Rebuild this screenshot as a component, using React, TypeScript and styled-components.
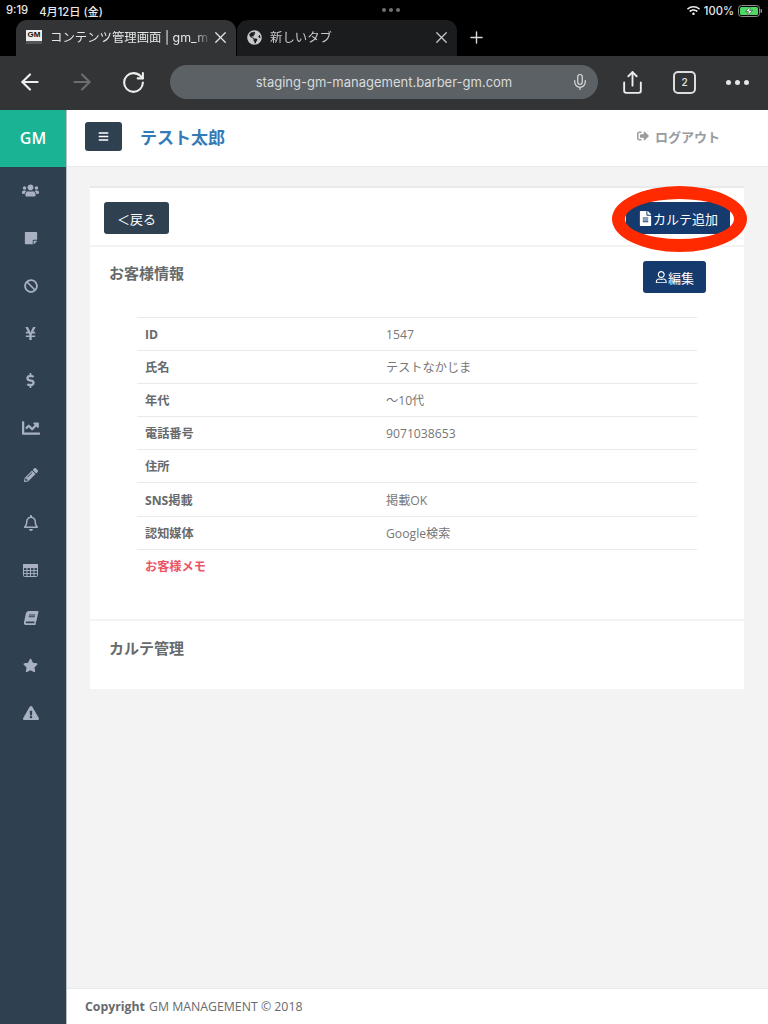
import React from "react";
import styled, { createGlobalStyle } from "styled-components";
import { ArrowLeft, ArrowRight, RotateCw, Mic, Share, X, Plus } from "lucide-react";
import {
  FaUsers, FaStickyNote, FaBan, FaYenSign, FaDollarSign, FaChartLine, FaPencilAlt, FaRegBell,
  FaBook, FaStar, FaExclamationTriangle, FaBars, FaSignOutAlt, FaFileAlt, FaRegUser,
  FaGlobeAmericas, FaWifi,
} from "react-icons/fa";

const SANS = `"Open Sans", "Noto Sans CJK JP", sans-serif`;
const UI = `Inter, "Noto Sans CJK JP", sans-serif`;

const Global = createGlobalStyle`
  html, body { margin: 0; padding: 0; background: #000; }
  * { box-sizing: border-box; }
  #root { width: 768px; height: 1024px; overflow: hidden; }
`;

const Screen = styled.div`
  position: relative; width: 768px; height: 1024px; display: flex; flex-direction: column;
  font-family: ${SANS}; background: #000;
`;
const Status = styled.div`
  height: 20px; flex: none; padding: 1px 6px 0 6px; display: flex; align-items: center;
  justify-content: space-between; color: #e8e8e8; font: 500 11.2px ${UI};
`;
const StatusLeft = styled.div`display: flex; gap: 11px;`;
const StatusRight = styled.div`display: flex; align-items: center; gap: 4px;`;
const Dots = styled.div`
  display: flex; gap: 3px; margin-left: -8px; margin-bottom: 1px;
  & i { width: 4px; height: 4px; border-radius: 50%; background: #6f7072; display: block; }
`;
const Tabs = styled.div`
  height: 36px; flex: none; padding-left: 16px; display: flex; align-items: stretch; gap: 1px;
`;
const Tab = styled.div<{ $active?: boolean }>`
  width: 220px; border-radius: 11px 11px 0 0; padding: 0 6px 2px 10px; display: flex; align-items: center;
  background: ${(p) => (p.$active ? "#333436" : "#1b1c1e")};
  color: ${(p) => (p.$active ? "#e6e6e6" : "#c9c9c9")}; font: 400 12.4px ${UI};
`;
const Favicon = styled.div`
  width: 16px; height: 14px; background: #eee; flex: none; margin-right: 8px; display: flex; flex-direction: column;
  align-items: center; justify-content: flex-start; color: #111; font: 900 8px/9px "Liberation Sans", sans-serif;
  border-bottom: 3px solid #555;
`;
const TabTitle = styled.span`
  flex: 1; min-width: 0; overflow: hidden; white-space: nowrap;
  mask-image: linear-gradient(to right, #000 90%, transparent 100%);
`;
const TabAdd = styled.div`
  width: 36px; padding-bottom: 2px; display: flex; align-items: center; justify-content: center; color: #d8d8d8;
`;
const Toolbar = styled.div`
  height: 54px; flex: none; background: #333436; display: flex; align-items: center; color: #eee; padding-bottom: 2px;
`;
const NavIcons = styled.div`
  width: 170px; flex: none; display: flex; align-items: center; padding-left: 17px; gap: 26px;
`;
const Url = styled.div`
  width: 428px; height: 34px; flex: none; border-radius: 17px; background: #5c6165; color: #d9dbdc;
  display: flex; align-items: center; justify-content: center; position: relative; font: 400 13px ${UI};
`;
const MicSpot = styled.span`position: absolute; right: 9px; top: 8px; display: flex; color: #d9dbdc;`;
const ToolRight = styled.div`
  flex: 1; display: flex; align-items: center; padding-left: 22px; gap: 28px;
`;
const TabCount = styled.div`
  width: 23px; height: 23px; border: 2px solid #ddd; border-radius: 5px; font: 600 10px/19px ${UI};
  text-align: center; color: #ddd;
`;
const More = styled.div`
  display: flex; gap: 4px; margin-left: 2px;
  & i { width: 5px; height: 5px; border-radius: 50%; background: #e6e6e6; display: block; }
`;
const Body = styled.div`flex: 1; display: flex; min-height: 0; background: #f3f3f4;`;
const Side = styled.nav`
  width: 67px; flex: none; background: #2f4050; border-right: 1px solid #b8bec4; display: flex; flex-direction: column;
`;
const Brand = styled.div`
  height: 57px; flex: none; background: #1ab394; color: #fff; font: 600 16px/57px ${SANS}; text-align: center;
`;
const SideItems = styled.div`
  display: flex; flex-direction: column; align-items: center; padding-right: 5px;
`;
const SideItem = styled.div<{ $size: number; $skew?: boolean }>`
  height: 47.45px; width: 100%; display: flex; align-items: center; justify-content: center; color: #a7b1c2;
  font-size: ${(p) => p.$size}px;
  & svg { transform: ${(p) => (p.$skew ? "skewX(-12deg)" : "none")}; }
`;
const Main = styled.div`flex: 1; display: flex; flex-direction: column; min-width: 0;`;
const Header = styled.header`
  height: 57px; flex: none; background: #fff; border-bottom: 1px solid #e7eaec; display: flex; align-items: center;
  padding: 0 48px 4px 18px;
`;
const Burger = styled.div`
  width: 37px; height: 29px; border-radius: 3px; background: #2f4050; color: #fff; display: flex;
  align-items: center; justify-content: center; font-size: 11px;
`;
const UserName = styled.div`
  margin-left: 18px; flex: 1; color: #337ab7; font: 600 17px ${SANS};
`;
const Logout = styled.div`
  display: flex; align-items: center; gap: 6px; color: #999c9e; font: 600 13px ${SANS};
`;
const Content = styled.div`flex: 1; padding: 19px 24px 0 23px;`;
const Card = styled.section`
  height: 503px; background: #fff; border-top: 2px solid #e7eaec; display: flex; flex-direction: column;
`;
const CardTop = styled.div`
  height: 59px; flex: none; border-bottom: 2px solid #f3f3f4; padding: 14px 14px 0 14px; display: flex;
  justify-content: space-between; align-items: flex-start;
`;
const Btn = styled.div<{ $tone: "dark" | "navy" }>`
  height: 32px; border-radius: 3px; display: flex; align-items: center; justify-content: center;
  color: #fff; font: 400 13px ${SANS}; padding: 0 ${(p) => (p.$tone === "dark" ? "13px" : "12px")};
  background: ${(p) => (p.$tone === "dark" ? "#2f4050" : "#153a6e")};
`;
const InfoHead = styled.div`
  padding: 14px 38px 0 19px; height: 70px; flex: none; display: flex; justify-content: space-between; align-items: flex-start;
`;
const Title = styled.h3`margin: 1px 0 0; color: #676a6c; font: 600 15px ${SANS};`;
const InfoTable = styled.div`margin: 0 47px; border-top: 1px solid #e7eaec;`;
const Row = styled.div`
  height: 33.1px; display: grid; grid-template-columns: 241px 1fr; align-items: center; padding-left: 8px;
  border-bottom: 1px solid #e7eaec; font-size: 12.2px; color: #777;
  &:last-child { border-bottom: 0; }
`;
const Label = styled.div<{ $alert?: boolean }>`
  font-weight: 700; color: ${(p) => (p.$alert ? "#ed5565" : "#676a6c")};
`;
const Karte = styled.div`
  margin-top: 36px; border-top: 2px solid #f3f3f4; padding: 15px 19px;
`;
const Footer = styled.footer`
  height: 36px; flex: none; background: #fff; border-top: 1px solid #e7eaec; padding: 0 18px; display: flex;
  align-items: center; color: #676a6c; font-size: 12.3px;
  & b { margin-right: 4px; }
`;
const Marker = styled.div`
  position: absolute; left: 612px; top: 186px; width: 135px; height: 66px; border: 13px solid #ff2a00;
  border-radius: 50%; pointer-events: none;
`;
const BtnIcon = styled.span<{ $size: number }>`display: inline-flex; font-size: ${(p) => p.$size}px;`;

const TableIcon = () => (
  <svg width="15" height="13" viewBox="0 0 15 13" fill="none" stroke="currentColor" strokeWidth="1">
    <rect x="0.5" y="0.5" width="14" height="12" rx="1" />
    <path d="M0 3.6h15M0 6.6h15M0 9.6h15M4 3v10M7.5 3v10M11 3v10" />
    <rect x="0.5" y="0.5" width="14" height="3" fill="currentColor" />
  </svg>
);

const sideIcons: [React.ComponentType, number, boolean?][] = [
  [FaUsers, 17], [FaStickyNote, 14], [FaBan, 14], [FaYenSign, 15], [FaDollarSign, 15], [FaChartLine, 18],
  [FaPencilAlt, 14], [FaRegBell, 16], [TableIcon, 15], [FaBook, 14, true], [FaStar, 15], [FaExclamationTriangle, 16],
];
const rows: [string, string][] = [
  ["ID", "1547"], ["氏名", "テストなかじま"], ["年代", "～10代"], ["電話番号", "9071038653"],
  ["住所", ""], ["SNS掲載", "掲載OK"], ["認知媒体", "Google検索"],
];

export default function App() {
  return (
    <Screen>
      <Global />
      <Status>
        <StatusLeft><span>9:19</span><span>4月12日 (金)</span></StatusLeft>
        <Dots><i /><i /><i /></Dots>
        <StatusRight>
          <FaWifi size={13} />
          <span>100%</span>
          <svg width="24" height="12" viewBox="0 0 24 12">
            <rect x="0.5" y="0.5" width="21" height="11" rx="3" fill="none" stroke="#8a8a8a" />
            <rect x="2" y="2" width="18" height="8" rx="1.5" fill="#4cd964" />
            <rect x="22.5" y="4" width="1.5" height="4" rx="0.7" fill="#8a8a8a" />
            <path d="M12.5 1 7.5 6.6h3L9.5 11l5-5.6h-3z" fill="#fff" stroke="#111" strokeWidth=".5" />
          </svg>
        </StatusRight>
      </Status>
      <Tabs>
        <Tab $active>
          <Favicon>GM</Favicon>
          <TabTitle>コンテンツ管理画面 | gm_m</TabTitle>
          <X size={19} strokeWidth={1.6} />
        </Tab>
        <Tab>
          <FaGlobeAmericas size={15} style={{ marginRight: 8, flex: "none" }} />
          <TabTitle>新しいタブ</TabTitle>
          <X size={19} strokeWidth={1.6} />
        </Tab>
        <TabAdd><Plus size={19} strokeWidth={1.8} /></TabAdd>
      </Tabs>
      <Toolbar>
        <NavIcons>
          <ArrowLeft size={26} strokeWidth={2} />
          <ArrowRight size={26} strokeWidth={2} color="#6c6d6f" />
          <RotateCw size={25} strokeWidth={2} />
        </NavIcons>
        <Url>
          staging-gm-management.barber-gm.com
          <MicSpot><Mic size={18} strokeWidth={1.6} /></MicSpot>
        </Url>
        <ToolRight>
          <Share size={25} strokeWidth={1.8} />
          <TabCount>2</TabCount>
          <More><i /><i /><i /></More>
        </ToolRight>
      </Toolbar>
      <Body>
        <Side>
          <Brand>GM</Brand>
          <SideItems>
            {sideIcons.map(([I, size, skew], i) => (
              <SideItem key={i} $size={size} $skew={skew}><I /></SideItem>
            ))}
          </SideItems>
        </Side>
        <Main>
          <Header>
            <Burger><FaBars /></Burger>
            <UserName>テスト太郎</UserName>
            <Logout><FaSignOutAlt size={12} />ログアウト</Logout>
          </Header>
          <Content>
            <Card>
              <CardTop>
                <Btn $tone="dark">＜戻る</Btn>
                <Btn $tone="navy"><BtnIcon $size={15}><FaFileAlt /></BtnIcon>カルテ追加</Btn>
              </CardTop>
              <InfoHead>
                <Title>お客様情報</Title>
                <Btn $tone="navy"><BtnIcon $size={12.5}><FaRegUser /></BtnIcon>編集</Btn>
              </InfoHead>
              <InfoTable>
                {rows.map(([k, v]) => (
                  <Row key={k}><Label>{k}</Label><div>{v}</div></Row>
                ))}
                <Row><Label $alert>お客様メモ</Label><div /></Row>
              </InfoTable>
              <Karte><Title>カルテ管理</Title></Karte>
            </Card>
          </Content>
          <Footer><b>Copyright</b> GM MANAGEMENT © 2018</Footer>
        </Main>
      </Body>
      <Marker />
    </Screen>
  );
}
